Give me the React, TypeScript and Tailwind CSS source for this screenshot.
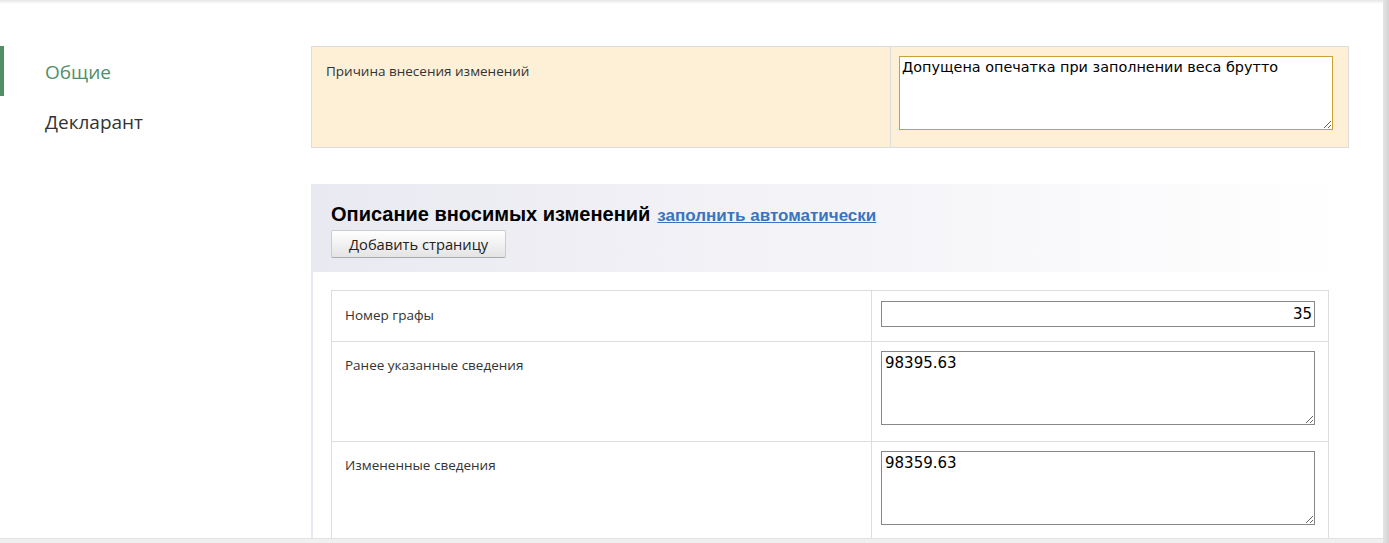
import React from 'react';

const label = "font-['Open_Sans',sans-serif] text-[13.5px] text-[#333]";
const field = "font-['DejaVu_Sans',sans-serif] text-black";

function Sidebar() {
  return (
    <aside className="w-[311px] shrink-0 pt-[42px] font-['Open_Sans',sans-serif] text-[19px]">
      <div className="flex h-[50px] items-center border-l-[4px] border-[#4f9068] pl-[41px] pt-[2px] text-[#4f9068]">Общие</div>
      <div className="flex h-[50px] items-center pl-[45px] pt-[2px] text-[#333]">Декларант</div>
    </aside>
  );
}

function ReasonPanel() {
  return (
    <div className="flex h-[102px] border border-[#ddd] bg-[#fef0d7]">
      <div className={`w-[579px] border-r border-[#ddd] px-[14px] pt-[14px] ${label}`}>Причина внесения изменений</div>
      <div className="flex-1 pl-[8px] pt-[9px]">
        <textarea
          readOnly
          defaultValue="Допущена опечатка при заполнении веса брутто"
          className={`block h-[74px] w-[434px] resize border border-[#c9a032] bg-white px-[2px] py-0 text-[14.4px] outline-none ${field}`}
        />
      </div>
    </div>
  );
}

function Row({ name, first, h, children }: { name: string; first?: boolean; h: string; children: React.ReactNode }) {
  return (
    <div className={`flex ${first ? '' : 'border-t border-[#ddd]'} ${h}`}>
      <div className={`w-[540px] border-r border-[#ddd] px-[13px] ${first ? 'pt-[14px]' : 'pt-[13px]'} ${label}`}>{name}</div>
      <div className={`flex-1 pl-[9px] ${first ? 'pt-[10px]' : 'pt-[9px]'}`}>{children}</div>
    </div>
  );
}

function Area({ value }: { value: string }) {
  return (
    <textarea
      readOnly
      defaultValue={value}
      className={`block h-[74px] w-[434px] resize border border-[#888] bg-white px-[3px] py-0 text-[15px] outline-none ${field}`}
    />
  );
}

function ChangesPanel() {
  return (
    <div className="mt-[36px] border-l-[2px] border-[#e9e9f1]">
      <div className="h-[88px] bg-gradient-to-r from-[#e9e9f1] to-white pl-[18px] pt-[15px]">
        <div className="flex items-baseline gap-[7px]">
          <span className="font-['Liberation_Sans',sans-serif] text-[20px] font-bold text-black">Описание вносимых изменений</span>
          <a href="#" className="font-['Liberation_Sans',sans-serif] text-[17px] font-bold text-[#3b73c0] underline">заполнить автоматически</a>
        </div>
        <button className="mt-[1px] h-[28px] rounded-[2px] border border-[#ccc] border-b-[#aaa] bg-gradient-to-b from-white to-[#e4e4e4] px-[17px] font-['Open_Sans',sans-serif] text-[14.7px] text-[#222]">
          Добавить страницу
        </button>
      </div>
      <div className="px-[18px] pt-[18px]">
        <div className="w-[998px] border border-[#ddd]">
          <Row name="Номер графы" first h="h-[50px]">
            <input
              readOnly
              defaultValue="35"
              className={`block h-[26px] w-[434px] border border-[#888] bg-white px-[2px] text-right text-[15px] outline-none ${field}`}
            />
          </Row>
          <Row name="Ранее указанные сведения" h="h-[100px]">
            <Area value="98395.63" />
          </Row>
          <Row name="Измененные сведения" h="h-[100px]">
            <Area value="98359.63" />
          </Row>
        </div>
      </div>
    </div>
  );
}

export default function App() {
  return (
    <div className="flex h-[543px] w-[1389px] overflow-hidden bg-white">
      <div className="flex min-w-0 flex-1 flex-col">
        <div className="h-[4px] shrink-0 bg-gradient-to-b from-[#e6e6e6] to-white" />
        <div className="flex min-h-0 flex-1 overflow-hidden">
          <Sidebar />
          <main className="w-[1038px] shrink-0 pt-[42px]">
            <ReasonPanel />
            <ChangesPanel />
          </main>
        </div>
        <div className="h-[5px] shrink-0 border-t border-[#e2e2e2] bg-[#f0f0f0]" />
      </div>
      <div className="w-[6px] shrink-0 bg-gradient-to-r from-[#e4e4e4] to-[#d4d4d4]" />
    </div>
  );
}
